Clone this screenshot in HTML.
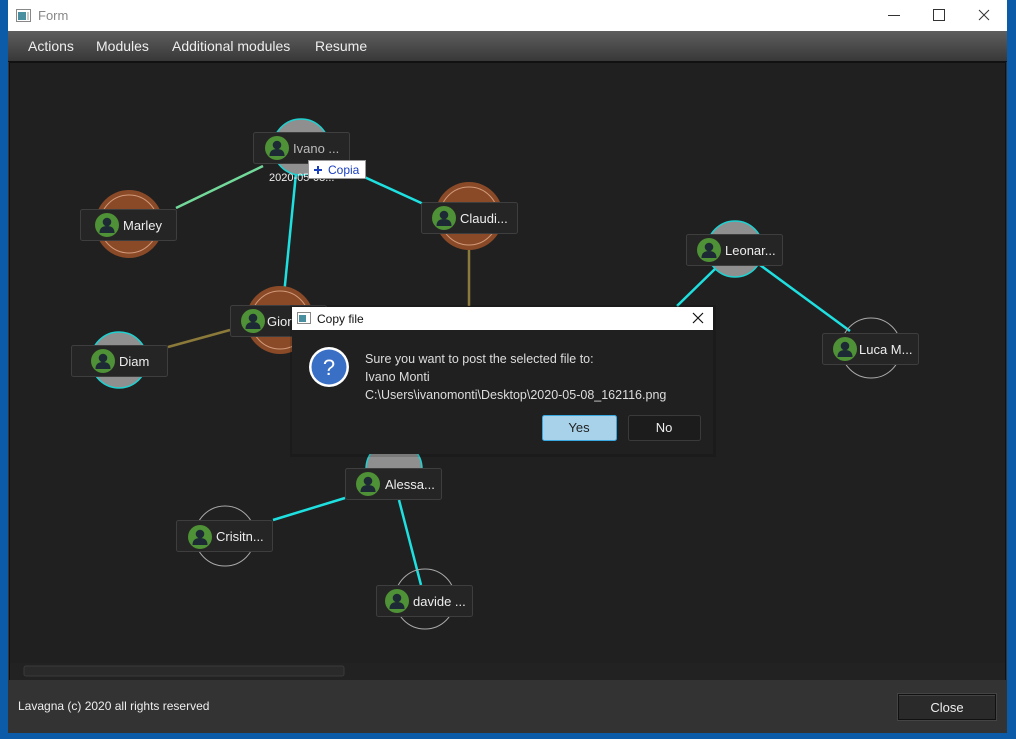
<!DOCTYPE html>
<html><head><meta charset="utf-8"><style>
body{margin:0;width:1016px;height:739px;background:#0b5ba8;overflow:hidden;font-family:"Liberation Sans",sans-serif;position:relative}
.win{position:absolute;left:8px;top:0;width:999px;height:733px;background:#333}
.title{position:absolute;left:0;top:0;width:999px;height:31px;background:#fff;color:#888;font-size:13px}
.menu{position:absolute;left:0;top:31px;width:999px;height:30px;background:linear-gradient(#5e5e5e,#383838);color:#eee;font-size:14px;border-bottom:1px solid #111}
.menu span{position:absolute;top:7px}
.canvas{position:absolute;left:1px;top:62px;width:997px;height:618px;background:#202020;border:1px solid #111;box-sizing:border-box}
.foot{position:absolute;left:10px;top:699px;color:#eee;font-size:12px}
.close{position:absolute;left:890px;top:694px;width:98px;height:26px;background:#2a2a2a;border:1px solid #111;box-shadow:inset 0 1px 0 #444,0 0 0 1px #444;color:#eee;font-size:13px;text-align:center;line-height:26px;box-sizing:border-box}
</style></head><body>
<div class="win">
<div class="title">
<svg style="position:absolute;left:8px;top:9px" width="15" height="13"><rect x="0.5" y="0.5" width="14" height="12" fill="#fff" stroke="#888"/><rect x="2" y="3" width="8" height="8" fill="#4a8fa0"/><rect x="11" y="3" width="2" height="8" fill="#ccc"/></svg>
<span style="position:absolute;left:30px;top:8px">Form</span>
<div style="position:absolute;left:880px;top:15px;width:12px;height:1px;background:#333"></div>
<div style="position:absolute;left:925px;top:9px;width:10px;height:10px;border:1px solid #333"></div>
<svg style="position:absolute;left:970px;top:9px" width="12" height="12"><path d="M1 1L11 11M11 1L1 11" stroke="#333" stroke-width="1"/></svg>
</div>
<div class="menu"><span style="left:20px">Actions</span><span style="left:88px">Modules</span><span style="left:164px">Additional modules</span><span style="left:307px">Resume</span></div>
<div class="canvas"></div>
<div class="foot">Lavagna (c) 2020 all rights reserved</div>
<div class="close">Close</div>
</div>
<svg style="position:absolute;left:0;top:0" width="1016" height="739" font-family="Liberation Sans, sans-serif">
<defs>
<g id="av"><circle r="12" fill="#4f9136"/><circle cy="-3" r="4.3" fill="#1d2a35"/><path d="M-7.5 8 Q-7.5 1 0 1 Q7.5 1 7.5 8Z" fill="#1d2a35"/></g>
</defs>
<rect x="10" y="663" width="995" height="17" fill="#222"/>
<rect x="24" y="666" width="320" height="10" rx="2" fill="#2a2a2a" stroke="#3a3a3a"/>
<g stroke-width="2.5">
<line x1="263" y1="166" x2="176" y2="208" stroke="#72d99a"/>
<line x1="297" y1="163" x2="283" y2="305" stroke="#1fe0e0"/>
<line x1="349" y1="170" x2="430" y2="207" stroke="#1fe0e0"/>
<line x1="469" y1="250" x2="469" y2="306" stroke="#8c7a3a"/>
<line x1="168" y1="347" x2="230" y2="330" stroke="#8c7a3a"/>
<line x1="716" y1="268" x2="677" y2="306" stroke="#1fe0e0"/>
<line x1="760" y1="265" x2="850" y2="331" stroke="#1fe0e0"/>
<line x1="345" y1="498" x2="273" y2="520" stroke="#1fe0e0"/>
<line x1="399" y1="500" x2="421" y2="585" stroke="#1fe0e0"/>
<line x1="410" y1="452" x2="402" y2="467" stroke="#8c7a3a"/>
</g>
<g>
<circle cx="301" cy="147" r="28" fill="#8f8f8f" stroke="#1fd0d0" stroke-width="1.5"/>
<circle cx="129" cy="224" r="34" fill="#8a4a28"/><circle cx="129" cy="224" r="29" fill="none" stroke="#d29a7a"/>
<circle cx="469" cy="216" r="34" fill="#8a4a28"/><circle cx="469" cy="216" r="29" fill="none" stroke="#d29a7a"/>
<circle cx="280" cy="320" r="34" fill="#8a4a28"/><circle cx="280" cy="320" r="29" fill="none" stroke="#d29a7a"/>
<circle cx="735" cy="249" r="28" fill="#8f8f8f" stroke="#1fd0d0" stroke-width="1.5"/>
<circle cx="119" cy="360" r="28" fill="#8f8f8f" stroke="#1fd0d0" stroke-width="1.5"/>
<circle cx="394" cy="469" r="28" fill="#8f8f8f" stroke="#1fd0d0" stroke-width="1.5"/>
<circle cx="871" cy="348" r="30" fill="none" stroke="#aaa"/>
<circle cx="225" cy="536" r="30" fill="none" stroke="#aaa"/>
<circle cx="425" cy="599" r="30" fill="none" stroke="#aaa"/>
</g>
<g fill="#252525" stroke="#3e3e3e">
<rect x="253.5" y="132.5" width="96" height="31" rx="2"/>
<rect x="80.5" y="209.5" width="96" height="31" rx="2"/>
<rect x="421.5" y="202.5" width="96" height="31" rx="2"/>
<rect x="230.5" y="305.5" width="96" height="31" rx="2"/>
<rect x="686.5" y="234.5" width="96" height="31" rx="2"/>
<rect x="822.5" y="333.5" width="96" height="31" rx="2"/>
<rect x="71.5" y="345.5" width="96" height="31" rx="2"/>
<rect x="345.5" y="468.5" width="96" height="31" rx="2"/>
<rect x="176.5" y="520.5" width="96" height="31" rx="2"/>
<rect x="376.5" y="585.5" width="96" height="31" rx="2"/>
</g>
<g>
<use href="#av" x="277" y="148"/><use href="#av" x="107" y="225"/><use href="#av" x="444" y="218"/>
<use href="#av" x="253" y="321"/><use href="#av" x="709" y="250"/><use href="#av" x="845" y="349"/>
<use href="#av" x="103" y="361"/><use href="#av" x="368" y="484"/><use href="#av" x="200" y="537"/><use href="#av" x="397" y="601"/>
</g>
<g fill="#eee" font-size="13">
<text x="293" y="153" fill="#bbb">Ivano ...</text>
<text x="123" y="230">Marley</text>
<text x="460" y="223">Claudi...</text>
<text x="267" y="326">Giorgio</text>
<text x="725" y="255">Leonar...</text>
<text x="859" y="354">Luca M...</text>
<text x="119" y="366">Diam</text>
<text x="385" y="489">Alessa...</text>
<text x="216" y="541">Crisitn...</text>
<text x="413" y="606">davide ...</text>
<text x="269" y="181" font-size="11">2020-05-08...</text>
</g>
<rect x="308.5" y="160.5" width="57" height="18" fill="#fff" stroke="#999"/>
<path d="M314 170h8M318 166v8" stroke="#1a3fbf" stroke-width="2"/>
<text x="328" y="174" font-size="12" fill="#1a3fbf">Copia</text>
<rect x="290" y="305" width="426" height="152" fill="#000" opacity="0.15"/>
<rect x="292" y="307" width="421" height="147" fill="#202020"/>
<rect x="292" y="307" width="421" height="23" fill="#fff"/>
<rect x="297.5" y="312.5" width="13" height="11" fill="#fff" stroke="#888"/><rect x="299" y="315" width="7" height="7" fill="#4a8fa0"/>
<text x="317" y="323" font-size="12" fill="#111">Copy file</text>
<path d="M693 313l10 10M703 313l-10 10" stroke="#111" stroke-width="1.2"/>
<circle cx="329" cy="367" r="20" fill="#fff"/><circle cx="329" cy="367" r="17.5" fill="#3a6fc6"/>
<text x="329" y="375" font-size="22" fill="#fff" text-anchor="middle">?</text>
<g fill="#ddd" font-size="12.5"><text x="365" y="363">Sure you want to post the selected file to:</text>
<text x="365" y="381">Ivano Monti</text><text x="365" y="399">C:\Users\ivanomonti\Desktop\2020-05-08_162116.png</text></g>
<rect x="542.5" y="415.5" width="74" height="25" rx="2" fill="#a8d2ea" stroke="#3aa8e0"/>
<text x="579" y="432" font-size="13" fill="#222" text-anchor="middle">Yes</text>
<rect x="628.5" y="415.5" width="72" height="25" rx="2" fill="#1c1c1c" stroke="#3a3a3a"/>
<text x="664" y="432" font-size="13" fill="#eee" text-anchor="middle">No</text>
</svg>
</body></html>
